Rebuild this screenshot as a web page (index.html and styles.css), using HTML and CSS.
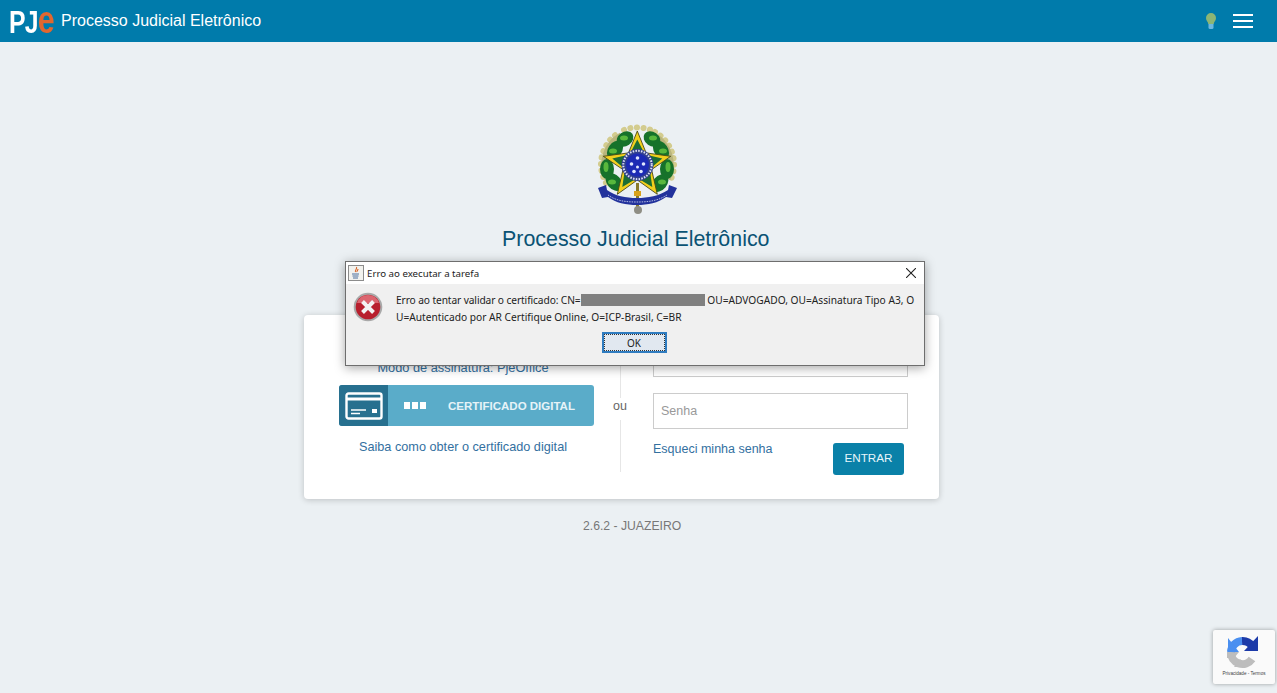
FILE: index.html
```html
<!DOCTYPE html>
<html lang="pt-BR">
<head>
  <meta charset="UTF-8">
  <title>Processo Judicial Eletrônico</title>
  <link rel="stylesheet" href="styles.css">
</head>
<body>

<header class="topbar">
  <div class="brand">
    <span class="brand-logo">PJ<span class="brand-e">e</span></span>
    <span class="brand-name">Processo Judicial Eletrônico</span>
  </div>
  <div class="topbar-tools">
    <svg class="bulb" width="14" height="18" viewBox="0 0 14 18">
      <rect x="4.500" y="9" width="5" height="8" rx="1.500" fill="#6db7df"/>
      <path d="M7 1a5 5 0 0 1 5 5c0 2.500-1.800 3.500-2.400 6H4.400C3.800 9.500 2 8.500 2 6a5 5 0 0 1 5-5z" fill="#8cb574"/>
    </svg>
    <div class="burger"><span></span><span></span><span></span></div>
  </div>
</header>

<main class="page">
  <svg class="crest" width="120" height="105" viewBox="0 0 120 105">
    <defs>
      <filter id="soft"><feGaussianBlur stdDeviation="0.55"/></filter>
    </defs>
    <g filter="url(#soft)">
      <!-- wreath edge -->
      <path d="M26 66A37 37 0 0 1 40 15M44 13Q57 8 71 13M75 15A37 37 0 0 1 89 66" fill="none" stroke="#d3cc8e" stroke-width="6" stroke-linecap="round" stroke-dasharray="0.100 6.500"/>
      <path d="M27 62A34 34 0 0 1 41 18M74 18A34 34 0 0 1 88 62" fill="none" stroke="#b9b57c" stroke-width="5"/>
      <!-- leaves -->
      <g fill="#17722a">
        <ellipse cx="45" cy="22" rx="9" ry="7" transform="rotate(-35 45 22)"/>
        <ellipse cx="35" cy="33" rx="10" ry="7" transform="rotate(-55 35 33)"/>
        <ellipse cx="27" cy="52" rx="7" ry="10"/>
        <ellipse cx="34" cy="65" rx="10" ry="7" transform="rotate(50 34 65)"/>
        <ellipse cx="72" cy="22" rx="9" ry="7" transform="rotate(35 72 22)"/>
        <ellipse cx="81" cy="33" rx="10" ry="7" transform="rotate(55 81 33)"/>
        <ellipse cx="87" cy="52" rx="7" ry="10"/>
        <ellipse cx="80" cy="66" rx="10" ry="7" transform="rotate(-50 80 66)"/>
      </g>
      <g fill="#58b83e">
        <ellipse cx="44" cy="21" rx="4" ry="2.500"/><ellipse cx="33" cy="34" rx="4" ry="2.500"/>
        <ellipse cx="26" cy="50" rx="2.500" ry="5"/><ellipse cx="32" cy="65" rx="4" ry="2.500"/>
        <ellipse cx="73" cy="21" rx="4" ry="2.500"/><ellipse cx="83" cy="34" rx="4" ry="2.500"/>
        <ellipse cx="88" cy="50" rx="2.500" ry="5"/><ellipse cx="82" cy="65" rx="4" ry="2.500"/>
      </g>
      <!-- star -->
      <polygon points="57.300,14 66.100,35.900 90.700,39.300 71.600,52.600 77.300,77.300 57.300,63 37.300,77.300 43,52.600 23.300,39.300 48.500,35.900" fill="#f2cf1e" stroke="#4a4a16" stroke-width="0.900"/>
      <polygon points="57.300,22.500 65,37.500 82.300,41.500 69.700,52 72.300,70 57.300,61 42.300,70 44.900,52 32.300,41.500 49.600,37.500" fill="#1a6d35"/>
      <!-- disc -->
      <circle cx="57.500" cy="48" r="16" fill="#33418f"/>
      <circle cx="57.500" cy="48" r="14.200" fill="none" stroke="#dfe3f2" stroke-width="2" stroke-dasharray="1.500 1.300"/>
      <circle cx="57.500" cy="48" r="11.500" fill="#1c2bb5"/>
      <g fill="#dfe6ff">
        <circle cx="57.500" cy="41" r="1.800"/><circle cx="51.500" cy="47" r="1.800"/><circle cx="63.500" cy="47" r="1.800"/>
        <circle cx="57.500" cy="50" r="1.500"/><circle cx="54" cy="54.500" r="1.800"/><circle cx="61" cy="54.500" r="1.800"/>
      </g>
      <!-- sword -->
      <rect x="56" y="66" width="3" height="24" fill="#8a7a2c"/>
      <rect x="54" y="74" width="7" height="5" fill="#d9a21e"/>
      <!-- ribbon -->
      <path d="M18 71l8-3 1 5c8 6 19 8 30 8s22-2 31-8l1-5 8 3-5 10-6-1c-8 6-18 8-29 8s-21-2-29-8l-6 1z" fill="#23339c"/>
      <path d="M28 78c8 6 18 7 29 7s21-1 30-7" fill="none" stroke="#c3c9ea" stroke-width="0.900" stroke-dasharray="1.500 1"/>
      <circle cx="58" cy="93" r="4" fill="#8e8e84"/>
    </g>
  </svg>
  <h1 class="title">Processo Judicial Eletrônico</h1>

  <section class="card">
    <div class="cert-col">
      <p class="sign-mode">Modo de assinatura: PjeOffice</p>
      <button class="cert-btn">
        <span class="cert-icon">
          <svg width="38" height="28" viewBox="0 0 38 28" fill="none" stroke="#fff">
            <rect x="1.500" y="1.500" width="35" height="25" rx="2" stroke-width="2.400"/>
            <rect x="2" y="5.500" width="34" height="3" fill="#fff" stroke="none"/>
            <path d="M6 18h15M6 21.500h9" stroke-width="1.300"/>
            <rect x="27" y="17" width="5" height="4" fill="#fff" stroke="none"/>
          </svg>
        </span>
        <span class="cert-dots"><i></i><i></i><i></i></span>
        <span class="cert-label">CERTIFICADO DIGITAL</span>
      </button>
      <a class="link cert-link" href="#">Saiba como obter o certificado digital</a>
    </div>

    <div class="or-col"><span class="or">ou</span></div>

    <form class="login-col">
      <input class="field" type="text">
      <input class="field" type="text" placeholder="Senha">
      <div class="login-foot">
        <a class="link forgot" href="#">Esqueci minha senha</a>
        <button class="enter" type="button">ENTRAR</button>
      </div>
    </form>
  </section>

  <p class="version">2.6.2 - JUAZEIRO</p>
</main>

<!-- janela do java por cima da pagina -->
<div class="dialog">
  <div class="dialog-title">
    <svg class="java" width="16" height="16" viewBox="0 0 16 16">
      <rect x="0.500" y="0.500" width="15" height="15" fill="#f2f2ee" stroke="#8c8c8c"/>
      <path d="M8.500 2c1 2-2 3-1 5M10 4c0 1.500-1.500 2-1 3" fill="none" stroke="#d8662a" stroke-width="1.100"/>
      <path d="M4 9h7M4.500 11h6M5 13h5" stroke="#4b6f9e" stroke-width="1.100"/>
    </svg>
    <span class="dialog-caption">Erro ao executar a tarefa</span>
    <svg class="close" width="10" height="10" viewBox="0 0 10 10">
      <path d="M0 0l10 10M10 0L0 10" stroke="#222" stroke-width="1.100"/>
    </svg>
  </div>
  <div class="dialog-body">
    <svg class="error-icon" width="30" height="30" viewBox="0 0 30 30">
      <circle cx="15" cy="15" r="14.300" fill="#a9a9a9"/>
      <circle cx="15" cy="15" r="12.300" fill="#b81f2d"/>
      <path d="M15 3a12 12 0 0 1 11 8H4a12 12 0 0 1 11-8z" fill="#dc6670"/>
      <path d="M9.500 9.500l11 11M20.500 9.500l-11 11" stroke="#f3f3f3" stroke-width="4"/>
    </svg>
    <p class="dialog-text"><span class="dialog-lead">Erro ao tentar validar o certificado: CN=</span><span class="redacted"></span> OU=ADVOGADO, OU=Assinatura Tipo A3, O<br>U=Autenticado por AR Certifique Online, O=ICP-Brasil, C=BR</p>
  </div>
  <div class="dialog-actions"><button class="dialog-ok">OK</button></div>
</div>

<div class="recaptcha">
  <svg width="36" height="38" viewBox="0 0 36 38" fill="none">
    <path d="M5 19a11.500 11.500 0 0 0 21 7" stroke="#bdbdbd" stroke-width="8"/>
    <polygon points="1,19 13,19 8,25 1,25" fill="#bdbdbd"/>
    <polygon points="8,34 22,34 14,26" fill="#bdbdbd"/>
    <path d="M5 19A11.500 11.500 0 0 1 16 8" stroke="#4a8ff0" stroke-width="8"/>
    <polygon points="2,5 2,19 13,19" fill="#4a8ff0"/>
    <path d="M16 8a11.500 11.500 0 0 1 10 5" stroke="#1c3aa9" stroke-width="8"/>
    <polygon points="32,3 32,18 18,18" fill="#1c3aa9"/>
  </svg>
  <span class="recaptcha-links">Privacidade - Termos</span>
</div>

</body>
</html>
```

FILE: styles.css
```css
* { box-sizing: border-box; }
body {
  margin: 0;
  height: 693px;
  overflow: hidden;
  background: #ebf0f3;
  font-family: "Liberation Sans", Arial, sans-serif;
  color: #555;
}
.topbar {
  height: 42px;
  background: #007bab;
  display: flex;
  align-items: center;
  justify-content: space-between;
  padding: 0 24px 0 9px;
}
.brand {
  display: flex;
  align-items: center;
  gap: 9px;
}
.brand-logo {
  display: block;
  width: 43px;
  font-size: 31px;
  line-height: 38px;
  font-weight: bold;
  letter-spacing: -1px;
  color: #fff;
  white-space: nowrap;
  transform: scaleX(0.8);
  transform-origin: left center;
}
.brand-e {
  font-size: 38px;
  color: #e2672f;
}
.brand-name {
  font-size: 16px;
  color: #fff;
}
.topbar-tools {
  display: flex;
  align-items: center;
  gap: 15px;
}
.burger {
  width: 20px;
  display: flex;
  flex-direction: column;
  gap: 4px;
}
.burger span {
  height: 2px;
  background: #fff;
}

.page {
  padding-top: 75px;
  display: flex;
  flex-direction: column;
}
.crest {
  display: block;
  margin-left: 580px;
}
.title {
  margin: 5px 0 0 502px;
  font-size: 21.400px;
  line-height: 24px;
  font-weight: normal;
  color: #0a5374;
}
.card {
  width: 635px;
  height: 184px;
  margin: 64px 0 0 304px;
  padding: 26px 31px 0 35px;
  background: #fff;
  border-radius: 4px;
  box-shadow: 0 1px 6px rgba(0,0,0,0.2);
  display: flex;
}
.cert-col {
  width: 255px;
  text-align: center;
}
.sign-mode {
  margin: 19px 7px 0 0;
  font-size: 12.800px;
  line-height: 16px;
  color: #33709f;
}
.cert-btn {
  display: flex;
  align-items: center;
  width: 255px;
  height: 41px;
  margin-top: 9px;
  padding: 0;
  border: none;
  border-radius: 3px;
  overflow: hidden;
  background: #5aacc9;
  color: #e6f3f8;
  font-family: inherit;
}
.cert-icon {
  width: 49px;
  height: 41px;
  background: #27708f;
  display: flex;
  align-items: center;
  justify-content: center;
}
.cert-dots {
  display: flex;
  gap: 2px;
  margin-left: 16px;
}
.cert-dots i {
  width: 6px;
  height: 7px;
  background: #fff;
}
.cert-label {
  margin-left: 22px;
  font-size: 11.500px;
  font-weight: bold;
}
.link {
  font-size: 12.700px;
  color: #33709f;
  text-decoration: none;
}
.cert-link {
  display: block;
  margin: 14px 7px 0 0;
}
.or-col {
  width: 59px;
  height: 131px;
  position: relative;
}
.or-col::before {
  content: "";
  position: absolute;
  left: 26px;
  top: 0;
  bottom: 0;
  width: 1px;
  background: #e6e6e6;
}
.or {
  position: absolute;
  left: 19px;
  top: 57px;
  padding: 0 0 6px;
  background: #fff;
  font-size: 12.500px;
  line-height: 16px;
  color: #666;
}
.login-col {
  width: 255px;
}
.field {
  display: block;
  width: 255px;
  height: 36px;
  margin-bottom: 16px;
  padding: 0 7px;
  border: 1px solid #ccc;
  background: #fff;
  font-family: inherit;
  font-size: 12.500px;
}
.field::placeholder { color: #999; }
.login-foot {
  display: flex;
  justify-content: space-between;
  align-items: flex-start;
  padding-right: 4px;
  margin-top: -2px;
}
.forgot {
  font-size: 12.500px;
  margin-top: -1px;
}
.enter {
  width: 71px;
  height: 32px;
  padding: 0 0 3px;
  border: none;
  border-radius: 3px;
  background: #0a81a8;
  color: #e8f6fb;
  font-family: inherit;
  font-size: 11.700px;
}
.version {
  margin: 20px 0 0 583px;
  font-size: 12.200px;
  line-height: 14px;
  color: #777;
}

.dialog {
  position: absolute;
  left: 345px;
  top: 261px;
  width: 580px;
  height: 105px;
  background: #f0f0f0;
  border: 1px solid #6e6e6e;
  box-shadow: 0 2px 10px rgba(0,0,0,0.35);
  font-family: "Noto Sans", sans-serif;
  color: #222;
}
.dialog-title {
  height: 22px;
  background: #fff;
  display: flex;
  align-items: center;
  padding: 0 8px 0 2px;
}
.dialog-caption {
  margin-left: 3px;
  font-size: 9.700px;
}
.close { margin-left: auto; }
.dialog-body {
  display: flex;
  padding: 8px 0 0 7px;
}
.error-icon { flex: none; }
.dialog-text {
  margin: 0 0 0 13px;
  font-size: 10.200px;
  line-height: 17px;
  white-space: nowrap;
}
.dialog-lead { letter-spacing: -0.1px; }
.redacted {
  display: inline-block;
  width: 124px;
  height: 12px;
  background: #808080;
  vertical-align: -2px;
}
.dialog-actions {
  display: flex;
  justify-content: center;
  margin: 6px 0 0 -2px;
}
.dialog-ok {
  width: 65px;
  height: 21px;
  padding: 0;
  border: 2px solid #2f7cc0;
  outline: 1px dotted #333;
  outline-offset: -3px;
  background: #e1e8f0;
  font-family: inherit;
  font-size: 10px;
  color: #222;
}

.recaptcha {
  position: absolute;
  left: 1213px;
  top: 630px;
  width: 62px;
  height: 54px;
  background: #fafafa;
  box-shadow: 0 0 4px rgba(0,0,0,0.35);
  border-radius: 2px;
  display: flex;
  flex-direction: column;
  align-items: center;
}
.recaptcha svg { margin-top: 3px; }
.recaptcha-links {
  font-size: 4.600px;
  line-height: 8px;
  margin-top: -1px;
  color: #444;
  white-space: nowrap;
}
```
